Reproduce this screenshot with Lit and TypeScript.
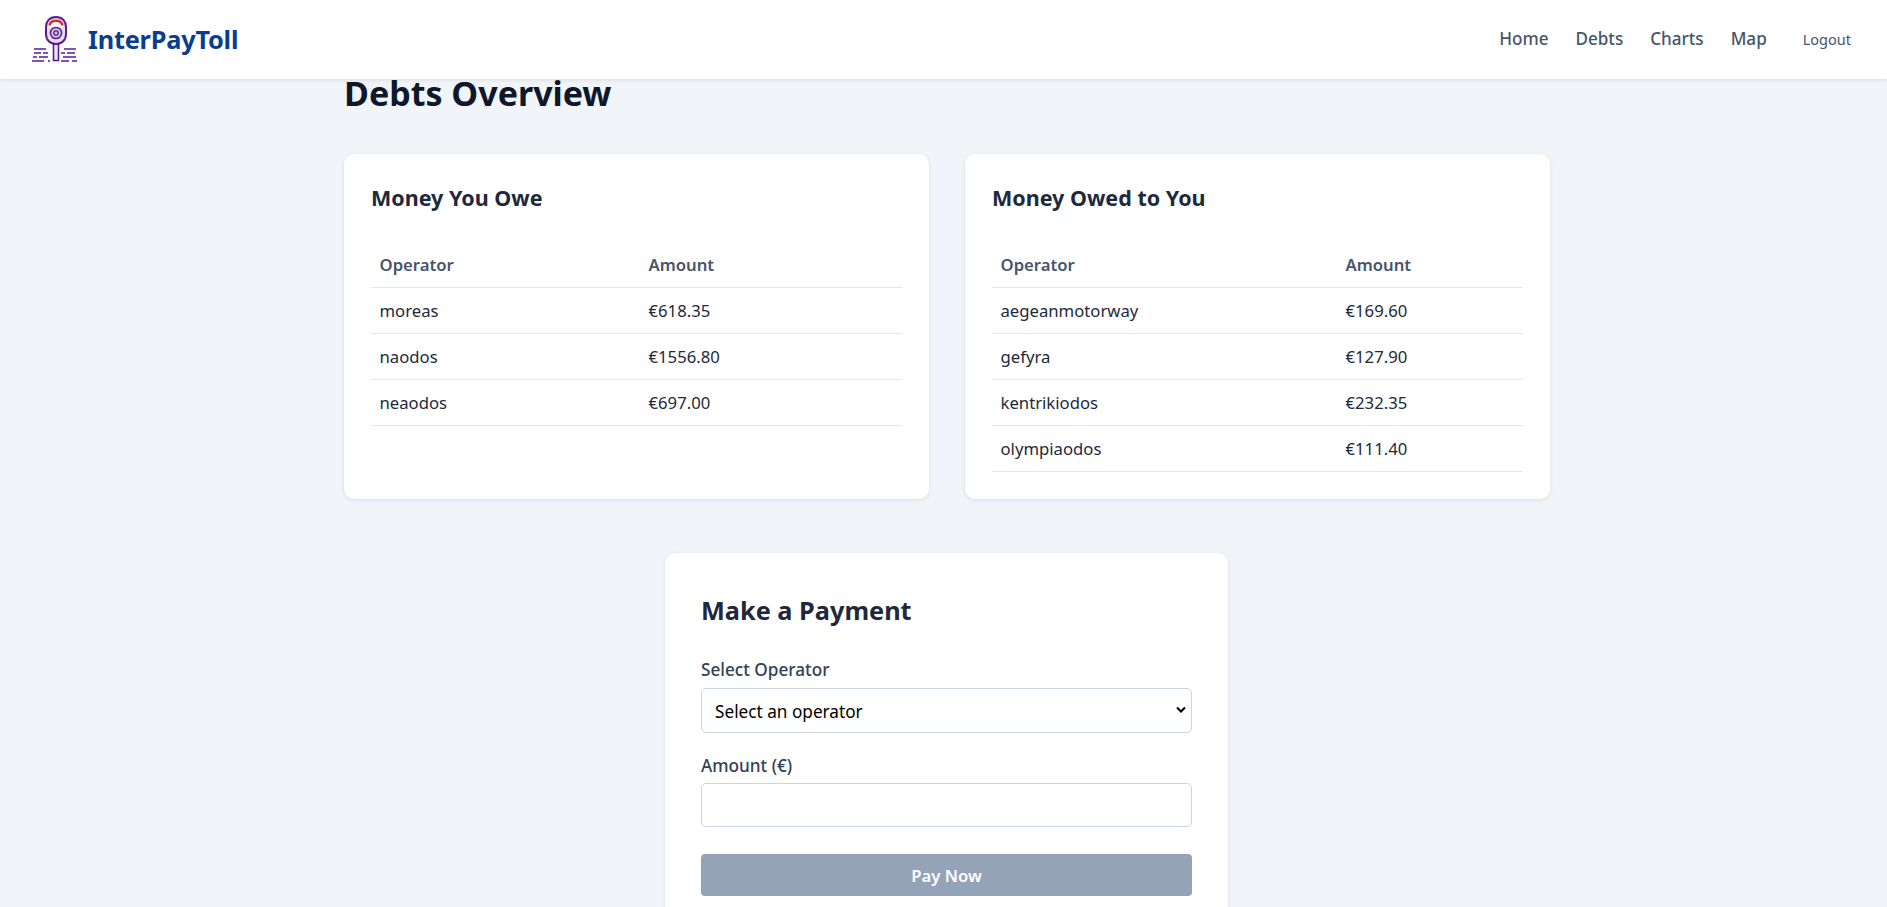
import { LitElement, html, css, svg } from "lit";
import { customElement } from "lit/decorators.js";

const owe = [["moreas", "€618.35"], ["naodos", "€1556.80"], ["neaodos", "€697.00"]];
const owed = [["aegeanmotorway", "€169.60"], ["gefyra", "€127.90"], ["kentrikiodos", "€232.35"], ["olympiaodos", "€111.40"]];

const logo = svg`
  <g fill="none" stroke="#5e1a91" stroke-width="2">
    <path d="M21.5 27V44.5H26.5V27" stroke-width="1.6" fill="#e9e6ee"/>
    <path d="M24 1C17.5 1 14 5.5 14 11V18C14 24 18 28 24 28C30 28 34 24 34 18V11C34 5.5 30.5 1 24 1Z" fill="#e4e0ea"/>
    <path d="M16.5 11C16.5 6 19.5 3.5 24 3.5C28.5 3.5 31.5 6 31.5 11Z" fill="#fff" stroke="none"/>
    <path d="M17.5 9.5C18 6.5 20.5 4.8 24 4.8C27.5 4.8 30 6.5 30.5 9.5" stroke="#d32f2f" stroke-width="2.4"/>
    <circle cx="24" cy="17" r="5.6" fill="#c9bfd6" stroke-width="1.5"/>
    <circle cx="24" cy="17" r="2.2" stroke-width="1.2"/>
    <path d="M0 45H12M16 45H18M29 45H37M40 45H45M1 41H5M7 41H16M31 41H44M2 37H9M11 37H16M29 37H33M35 37H43M2 33H14M32 33H44" stroke-width="1.5"/>
  </g>`;

@customElement("app-root")
export class AppRoot extends LitElement {
  static styles = css`
    :host { display: block; height: 907px; overflow: hidden; background: #f1f5f9; font-family: "Noto Sans", "Open Sans", sans-serif; color: #1e293b; }
    header { height: 79px; box-sizing: border-box; background: #fff; box-shadow: 0 1px 4px rgba(0,0,0,.1); display: flex; align-items: center; justify-content: space-between; padding: 0 36px 2px 32px; position: relative; }
    .brand { display: flex; align-items: center; gap: 10px; color: #0a3d8f; font-size: 25.3px; font-weight: 700; letter-spacing: -.2px; }
    .brand svg { display: block; width: 46px; height: 46px; }
    nav { display: flex; align-items: center; font-size: 17.1px; font-weight: 500; color: #475569; }
    nav a { margin-left: 27px; }
    nav .logout { font-size: 14.5px; font-weight: 400; margin-left: 36px; }
    main { padding: 0 337px 0 344px; }
    h1 { margin: 0; height: 75px; line-height: 28px; font-size: 34px; color: #0f172a; font-weight: 700; }
    .grid { display: grid; grid-template-columns: 1fr 1fr; gap: 36px; }
    .card { background: #fff; border-radius: 10px; box-shadow: 0 1px 4px rgba(0,0,0,.1); }
    .grid .card { padding: 27px; height: 345px; box-sizing: border-box; }
    h3 { margin: 0 0 27px; font-size: 21.5px; line-height: 34px; font-weight: 700; color: #1e293b; }
    table { width: 100%; border-collapse: collapse; font-size: 16.7px; table-layout: fixed; }
    th, td { text-align: left; padding: 0 8.5px; height: 45px; border-bottom: 1px solid #e2e8f0; font-weight: 400; }
    th { font-weight: 600; color: #475569; }
    .c1 { width: 269px; }
    .c2 { width: 345px; }
    .pay { width: 563px; box-sizing: border-box; margin: 54px 0 0 321px; padding: 37px 36px 36px; height: 400px; }
    h2 { margin: 0 0 28px; font-size: 25.3px; line-height: 40px; color: #1e293b; font-weight: 700; }
    label { display: block; font-size: 17.2px; font-weight: 500; color: #334155; line-height: 24px; margin-bottom: 6px; }
    .amount { margin-top: 21px; margin-bottom: 5px; }
    select, input { display: block; width: 100%; box-sizing: border-box; height: 45px; border: 1px solid #cbd5e1; border-radius: 5px; background: #fff; font: inherit; font-size: 17.2px; padding: 2px 13px 0; color: #000; appearance: none; }
    input { height: 44px; }
    .select-wrap { position: relative; }
    .chevron { position: absolute; right: 5px; top: 18px; width: 12px; height: 8px; pointer-events: none; }
    button { display: block; width: 100%; height: 42px; margin-top: 27px; border: 0; border-radius: 4px; background: #94a3b8; color: #fff; font: inherit; font-size: 16.7px; font-weight: 600; }
  `;

  table(rows: string[][], cls: string) {
    return html`<table>
      <colgroup><col class=${cls} /><col /></colgroup>
      <thead><tr><th>Operator</th><th>Amount</th></tr></thead>
      <tbody>${rows.map((r) => html`<tr><td>${r[0]}</td><td>${r[1]}</td></tr>`)}</tbody>
    </table>`;
  }

  render() {
    return html`
      <header>
        <div class="brand"><svg viewBox="0 0 46 46">${logo}</svg>InterPayToll</div>
        <nav><a>Home</a><a>Debts</a><a>Charts</a><a>Map</a><a class="logout">Logout</a></nav>
      </header>
      <main>
        <h1>Debts Overview</h1>
        <div class="grid">
          <section class="card"><h3>Money You Owe</h3>${this.table(owe, "c1")}</section>
          <section class="card"><h3>Money Owed to You</h3>${this.table(owed, "c2")}</section>
        </div>
        <section class="card pay">
          <h2>Make a Payment</h2>
          <label>Select Operator</label>
          <div class="select-wrap">
            <select><option>Select an operator</option></select>
            <svg class="chevron" viewBox="0 0 12 8"><path d="M2 1.5L6 5.5L10 1.5" fill="none" stroke="#000" stroke-width="2"/></svg>
          </div>
          <label class="amount">Amount (€)</label>
          <input type="text" />
          <button disabled>Pay Now</button>
        </section>
      </main>`;
  }
}
